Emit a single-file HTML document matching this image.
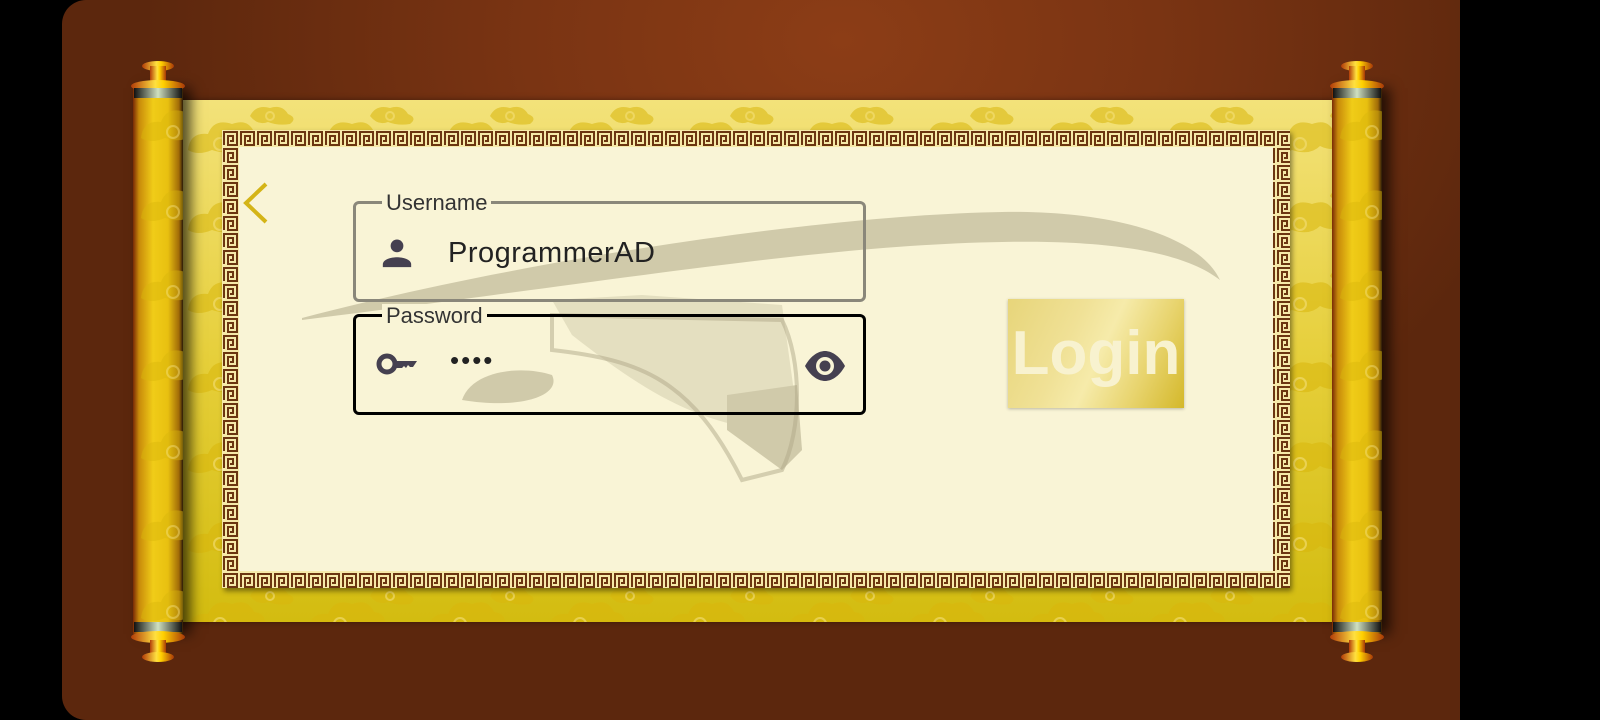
<!DOCTYPE html>
<html><head><meta charset="utf-8"><style>
*{margin:0;padding:0;box-sizing:border-box}
body{width:1600px;height:720px;background:#000;position:relative;overflow:hidden;font-family:"Liberation Sans",Roboto,sans-serif}
.bg{position:absolute;left:62px;top:0;width:1398px;height:720px;border-radius:24px 0 0 24px;background:radial-gradient(ellipse 700px 520px at 780px 40px,#8c3d16 0%,#7a3413 45%,#5c270d 100%)}
.band{position:absolute;left:180px;top:100px;width:1155px;height:522px;background:linear-gradient(180deg,#f3e27a 0%,#e6cf3a 50%,#d3bc10 100%);box-shadow:0 0 6px rgba(0,0,0,.4)}
.clouds{position:absolute;left:0;top:0}
.roller{position:absolute;width:50px;top:88px;height:546px;background:linear-gradient(90deg,#7a2a06 0%,#c88a0a 12%,#f0cc18 40%,#e8c010 70%,#a06a08 92%,#2a1a08 100%);box-shadow:8px 0 12px rgba(0,0,0,.65);overflow:hidden}
.frame{position:absolute;left:222px;top:130px;width:1068px;height:458px;background:#f9f4d6;box-shadow:2px 3px 5px rgba(0,0,0,.45)}
.field{position:absolute;left:353px;width:513px;height:101px;border-radius:6px}
.lbl{position:absolute;left:26px;top:-13px;padding:0 4px;font-size:22px;color:#333;background:#f9f4d6;line-height:24px}
.txt{position:absolute;font-size:29px;color:#222;letter-spacing:.5px}
.login{position:absolute;left:1008px;top:299px;width:176px;height:109px;background:linear-gradient(115deg,#e7d57a 0%,#f0e196 35%,#f6ebaa 52%,#e8d46e 75%,#d4b82a 100%);box-shadow:0 1px 3px rgba(0,0,0,.25);color:#f8f2cf;font-weight:bold;font-size:62px;text-align:center;line-height:109px}
</style></head><body>
<div class="bg"></div>
<svg width="0" height="0" style="position:absolute"><defs><pattern id="cl" width="120" height="80" patternUnits="userSpaceOnUse">
<g fill="#d8b60a" opacity=".55"><path d="M8 50 q2 -18 20 -16 q6 -16 24 -10 q16 -6 22 8 q14 2 10 14 q-12 6 -24 0 q-10 10 -28 4 q-14 6 -24 0z"/><path d="M70 16 q6 -12 20 -8 q12 -4 18 6 q10 4 2 10 q-12 2 -22 -2 q-10 4 -18 -6z"/></g>
<g fill="none" stroke="#f3e07a" stroke-width="2" opacity=".6"><circle cx="40" cy="44" r="6"/><circle cx="90" cy="16" r="4"/></g>
</pattern></defs></svg>
<div class="band">
<svg class="clouds" width="1155" height="522"><rect width="1155" height="522" fill="url(#cl)"/></svg>
</div>
<div class="roller" style="left:133px"><svg width="50" height="546"><rect width="50" height="546" fill="url(#cl)" opacity=".8"/></svg></div>
<div class="roller" style="left:1332px"><svg width="50" height="546"><rect width="50" height="546" fill="url(#cl)" opacity=".8"/></svg></div>
<svg style="position:absolute;left:0;top:0" width="1600" height="720">
<defs><linearGradient id="cap" x1="0" x2="1"><stop offset="0" stop-color="#b23c08"/><stop offset=".45" stop-color="#ffe040"/><stop offset=".6" stop-color="#ffd000"/><stop offset="1" stop-color="#a83808"/></linearGradient>
<linearGradient id="rim" x1="0" x2="1"><stop offset="0" stop-color="#111"/><stop offset=".5" stop-color="#cfe0c0"/><stop offset="1" stop-color="#111"/></linearGradient></defs>
<g fill="url(#cap)">
<ellipse cx="158" cy="66" rx="16" ry="5"/><rect x="150" y="66" width="16" height="16"/><ellipse cx="158" cy="86" rx="27" ry="6"/><rect x="134" y="88" width="48" height="10" fill="url(#rim)"/>
<ellipse cx="1357" cy="66" rx="16" ry="5"/><rect x="1349" y="66" width="16" height="16"/><ellipse cx="1357" cy="86" rx="27" ry="6"/><rect x="1333" y="88" width="48" height="10" fill="url(#rim)"/>
<rect x="134" y="622" width="48" height="10" fill="url(#rim)"/><ellipse cx="158" cy="637" rx="27" ry="6"/><rect x="150" y="640" width="16" height="16"/><ellipse cx="158" cy="657" rx="16" ry="5"/>
<rect x="1333" y="622" width="48" height="10" fill="url(#rim)"/><ellipse cx="1357" cy="637" rx="27" ry="6"/><rect x="1349" y="640" width="16" height="16"/><ellipse cx="1357" cy="657" rx="16" ry="5"/>
</g></svg>
<div class="frame">
<svg width="1068" height="458" style="position:absolute;left:0;top:0">
<defs><pattern id="gk" width="17" height="17" patternUnits="userSpaceOnUse"><rect width="17" height="17" fill="#f6e9a8"/><path d="M2 15V2h13v13H6V6h5v5H8" fill="none" stroke="#6b3510" stroke-width="2"/></pattern></defs>
<rect x="0" y="0" width="1068" height="17" fill="url(#gk)"/><rect x="0" y="441" width="1068" height="17" fill="url(#gk)"/>
<rect x="0" y="0" width="17" height="458" fill="url(#gk)"/><rect x="1051" y="0" width="17" height="458" fill="url(#gk)"/>
<g fill="#b0a888" opacity=".55">
<path d="M80 188 C300 130 600 85 780 82 C900 80 980 110 998 150 C960 120 880 110 780 112 C600 115 400 150 80 190z"/>
<path d="M330 170 L420 165 L560 175 L580 320 L565 335 L540 300 C470 290 420 260 350 205z" opacity=".5"/>
<path d="M505 265 L575 255 L580 320 L560 340 L505 300z"/>
<path d="M240 270 C250 240 300 235 330 245 C340 265 300 280 240 270z"/>
</g>
<g fill="none" stroke="#b0a888" stroke-width="4" opacity=".5"><path d="M330 185 L560 190 C580 230 580 300 560 340 L520 350 C470 250 420 230 330 220z"/></g>
<path d="M44 54 L24 73 L44 92" fill="none" stroke="#d4b417" stroke-width="4"/>
</svg>
</div>
<div class="field" style="top:201px;border:3px solid #8a877a">
<div class="lbl">Username</div>
<svg style="position:absolute;left:24px;top:32px" width="34" height="34" viewBox="0 0 24 24"><circle cx="12" cy="7" r="4.5" fill="#454050"/><path d="M2 22v-2c0-3.5 6-5 10-5s10 1.5 10 5v2z" fill="#454050"/></svg>
<div class="txt" style="left:92px;top:33px">ProgrammerAD</div>
</div>
<div class="field" style="top:314px;border:3px solid #000">
<div class="lbl">Password</div>
<svg style="position:absolute;left:20px;top:34px" width="44" height="26" viewBox="0 0 44 26"><circle cx="11" cy="13" r="8" fill="none" stroke="#454050" stroke-width="5"/><path d="M17 10h24l-4 6h-3l-2-2-2 3-2-2-2 2h-9z" fill="#454050"/></svg>
<div class="txt" style="left:94px;top:28px;font-size:26px;letter-spacing:2px">••••</div>
<svg style="position:absolute;left:447px;top:33px" width="44" height="32" viewBox="0 0 44 32"><path d="M2 16C8 5 16 1 22 1s14 4 20 15c-6 11-14 15-20 15S8 27 2 16z" fill="#454050"/><circle cx="22" cy="16" r="9" fill="#f9f4d6"/><circle cx="22" cy="16" r="5.5" fill="#454050"/></svg>
</div>
<div class="login">Login</div>
</body></html>
